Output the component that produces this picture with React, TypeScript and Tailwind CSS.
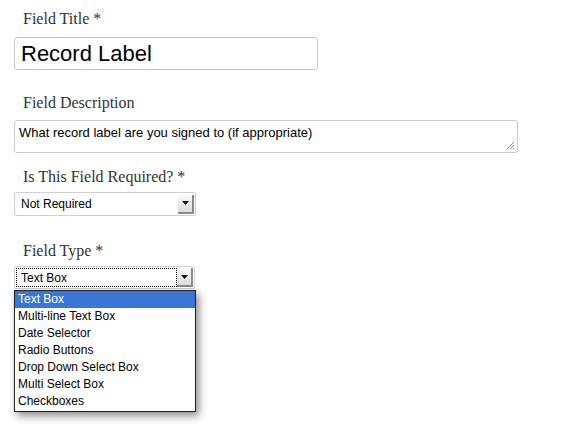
const serif = { fontFamily: '"Liberation Serif", Georgia, serif' };

const Arrow = () => (
  <div className="flex h-[19px] w-[16px] items-center justify-center border-r-2 border-b-2 border-[#8a8a8a] bg-gradient-to-b from-[#fafafa] to-[#dcdcdc]">
    <svg width="7" height="4" viewBox="0 0 7 4">
      <path d="M0 0H7L3.5 4Z" fill="#111" />
    </svg>
  </div>
);

const items = [
  "Text Box",
  "Multi-line Text Box",
  "Date Selector",
  "Radio Buttons",
  "Drop Down Select Box",
  "Multi Select Box",
  "Checkboxes",
];

export default function App() {
  return (
    <div
      className="h-[424px] w-[584px] bg-white pl-[14px] text-black"
      style={{ fontFamily: '"Liberation Sans", Arial, sans-serif' }}
    >
      <div className="flex flex-col">
        <div className="ml-[9px] mt-[9px] h-[20px] text-[16px] leading-[20px] text-[#333]" style={serif}>
          Field Title *
        </div>
        <div className="mt-[8px] flex h-[33px] w-[304px] items-center rounded-[3px] border border-[#c8c8c8] pl-[6px] text-[22px]">
          Record Label
        </div>

        <div className="ml-[9px] mt-[23px] h-[20px] text-[16px] leading-[20px] text-[#333]" style={serif}>
          Field Description
        </div>
        <div className="relative mt-[7px] h-[33px] w-[504px] rounded-[3px] border border-[#c8c8c8] pl-[4px] pt-[4px] text-[13px] leading-[16px]">
          What record label are you signed to (if appropriate)
          <svg className="absolute right-[2px] bottom-[2px]" width="9" height="9" viewBox="0 0 9 9">
            <path d="M8 1L1 8M8 4L4 8M8 7L7 8" stroke="#888" strokeWidth="1" />
          </svg>
        </div>

        <div className="ml-[9px] mt-[14px] h-[20px] text-[16px] leading-[20px] text-[#333]" style={serif}>
          Is This Field Required? *
        </div>
        <div className="mt-[5px] flex h-[24px] w-[182px] items-center justify-between rounded-[2px] border border-[#d0d0d0] pl-[6px] pr-[1px] text-[12px]">
          <span>Not Required</span>
          <Arrow />
        </div>

        <div className="ml-[9px] mt-[25px] h-[20px] text-[16px] leading-[20px] text-[#333]" style={serif}>
          Field Type *
        </div>
        <div className="mt-[5px] flex h-[23px] w-[181px] items-center rounded-[2px] border border-[#d0d0d0] pl-[1px] pr-[1px] text-[12px]">
          <div className="flex h-[19px] flex-1 items-center border border-dotted border-black pl-[4px]">
            Text Box
          </div>
          <Arrow />
        </div>
        <div className="mt-[1px] w-[182px] border border-[#222] bg-white pb-[1px] text-[12px] leading-[17px] shadow-[3px_4px_8px_rgba(0,0,0,0.45)]">
          {items.map((t, i) => (
            <div
              key={t}
              className={`h-[17px] pl-[3px] ${i === 0 ? "bg-[#3a76d8] text-white" : ""}`}
            >
              {t}
            </div>
          ))}
        </div>
      </div>
    </div>
  );
}
